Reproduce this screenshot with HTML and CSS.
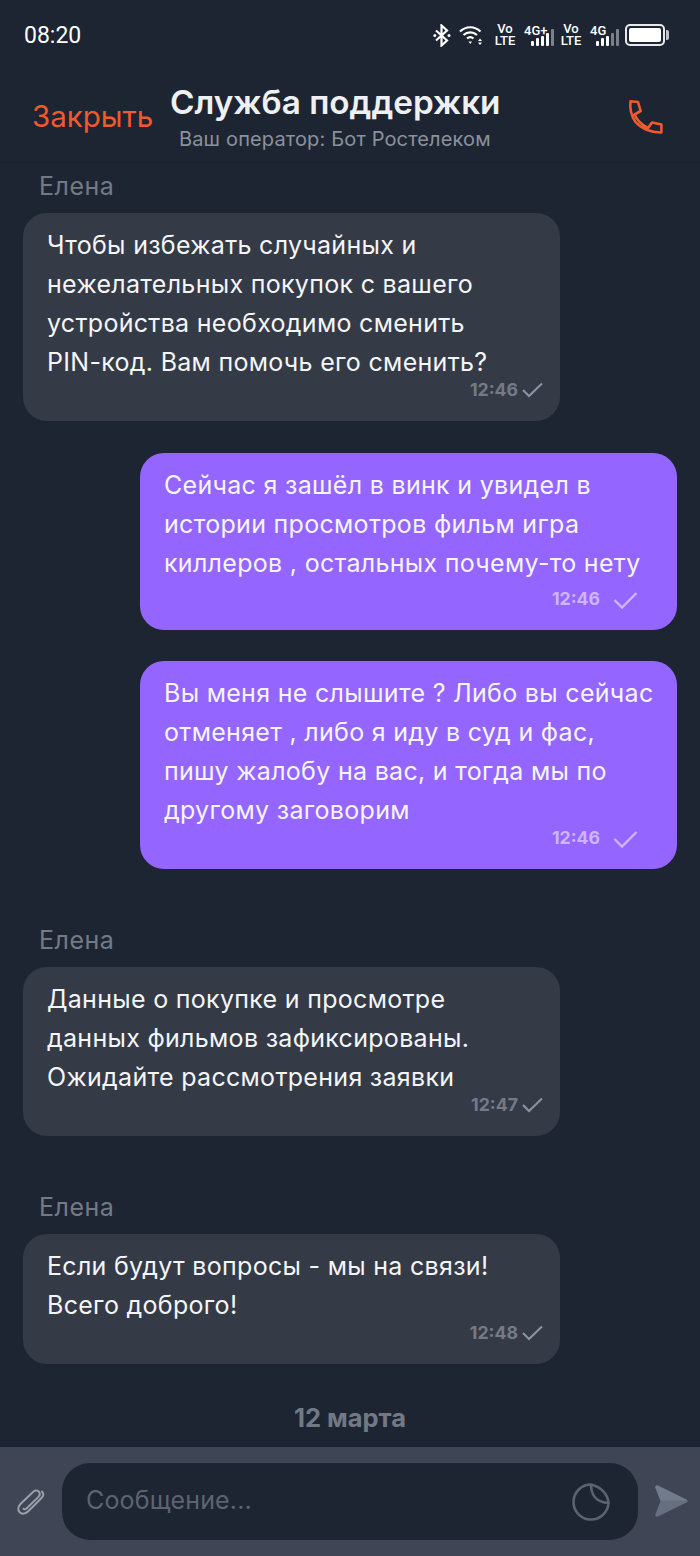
FILE: index.html
```html
<!DOCTYPE html>
<html lang="ru">
<head>
  <meta charset="UTF-8">
  <meta name="viewport" content="width=device-width, initial-scale=1">
  <title>Служба поддержки</title>
  <link rel="stylesheet" href="styles.css">
</head>
<body>
  <div class="screen">
    <div class="status-bar">
      <span class="clock">08:20</span>
      <div class="status-icons">
        <svg class="ic-bt" width="18" height="23" viewBox="0 0 18 23"><path d="M3 6.500l11 10-5.500 5V1.500l5.500 5-11 10" fill="none" stroke="#fff" stroke-width="2.200"/><circle cx="1.800" cy="11.500" r="1.500" fill="#fff"/><circle cx="16" cy="11.500" r="1.500" fill="#fff"/></svg>
        <svg class="ic-wifi" width="25" height="20" viewBox="0 0 25 20"><path d="M1 6.500C7 .8 15.500.8 21.500 6.500M4.500 10c4-3.500 9.500-3.500 13.500 0M8 13.500c2-1.700 4.500-1.700 6.500 0" fill="none" stroke="#fff" stroke-width="2.200"/><path d="M9.500 16.500h3.500l-1.700 2.500zM21 13.500l2 2.500h-4zM21 20l2-2.600h-4z" fill="#fff"/></svg>
        <div class="volte volte-first"><span>Vo</span><span>LTE</span></div>
        <div class="net">
          <span class="net-label">4G+</span>
          <div class="bars"><i class="b1"></i><i class="b2"></i><i class="b3"></i><i class="b4"></i><i class="b5 off"></i></div>
        </div>
        <div class="volte"><span>Vo</span><span>LTE</span></div>
        <div class="net net-short">
          <span class="net-label">4G</span>
          <div class="bars"><i class="b1"></i><i class="b2"></i><i class="b3"></i><i class="b4 off"></i><i class="b5 off"></i></div>
        </div>
        <div class="battery"><div class="battery-fill"></div></div>
      </div>
    </div>

    <header class="top-bar">
      <a class="close-link">Закрыть</a>
      <div class="top-title">
        <h1>Служба поддержки</h1>
        <p>Ваш оператор: Бот Ростелеком</p>
      </div>
      <svg class="phone" width="38" height="38" viewBox="0 0 38 38"><path d="M3.500 4.300L11 5l2.700 9-6.200 3.500C10 23 15 28 21 31l4-5.500 9.400 2v8C24 35.700 14 31.500 8.500 25 4.500 19 2.600 12 3.500 4.300z" fill="none" stroke="#f2592e" stroke-width="2.600" stroke-linejoin="round"/></svg>
    </header>

    <main class="chat">
      <div class="sender first">Елена</div>
      <div class="bubble in">
        <div class="text">Чтобы избежать случайных и<br>нежелательных покупок с вашего<br>устройства необходимо сменить<br>PIN-код. Вам помочь его сменить?</div>
        <div class="meta"><span class="time">12:46</span><svg class="tick" width="21" height="16" viewBox="0 0 21 16"><path d="M1 8l6 6L20 1.500" fill="none" stroke="currentColor" stroke-width="2"/></svg></div>
      </div>

      <div class="bubble out out-a">
        <div class="text">Сейчас я зашёл в винк и увидел в<br>истории просмотров фильм игра<br>киллеров , остальных почему-то нету</div>
        <div class="meta meta-low"><span class="time">12:46</span><svg class="tick" width="25" height="19" viewBox="0 0 25 19"><path d="M1.500 9l7.500 7.500L23.500 2" fill="none" stroke="currentColor" stroke-width="2.400"/></svg></div>
      </div>
      <div class="bubble out out-b">
        <div class="text">Вы меня не слышите ? Либо вы сейчас<br>отменяет , либо я иду в суд и фас,<br>пишу жалобу на вас, и тогда мы по<br>другому заговорим</div>
        <div class="meta"><span class="time">12:46</span><svg class="tick" width="25" height="19" viewBox="0 0 25 19"><path d="M1.500 9l7.500 7.500L23.500 2" fill="none" stroke="currentColor" stroke-width="2.400"/></svg></div>
      </div>

      <div class="sender">Елена</div>
      <div class="bubble in">
        <div class="text">Данные о покупке и просмотре<br>данных фильмов зафиксированы.<br>Ожидайте рассмотрения заявки</div>
        <div class="meta"><span class="time">12:47</span><svg class="tick" width="21" height="16" viewBox="0 0 21 16"><path d="M1 8l6 6L20 1.500" fill="none" stroke="currentColor" stroke-width="2"/></svg></div>
      </div>

      <div class="sender">Елена</div>
      <div class="bubble in">
        <div class="text">Если будут вопросы - мы на связи!<br>Всего доброго!</div>
        <div class="meta"><span class="time">12:48</span><svg class="tick" width="21" height="16" viewBox="0 0 21 16"><path d="M1 8l6 6L20 1.500" fill="none" stroke="currentColor" stroke-width="2"/></svg></div>
      </div>

      <div class="date">12 марта</div>
    </main>

    <footer class="composer">
      <svg class="clip" width="32" height="32" viewBox="0 0 32 32"><path d="M27 5.500c1.800 2 1.500 4.500-.5 6.500L13.500 25c-3 3-6.500 3.500-8.800 1.200s-1.800-5.700 1-8.500L18 6c1.800-1.800 4.200-2 5.700-.5s1.300 3.800-.5 5.600L11.500 22.500c-1 1-2.200 1.100-3 .3" fill="none" stroke="#9aa0aa" stroke-width="2" stroke-linecap="round"/></svg>
      <div class="input-box">
        <span class="placeholder">Сообщение...</span>
        <svg class="sticker" width="40" height="40" viewBox="0 0 40 40"><path d="M20 2.500a17.500 17.500 0 1 0 17.500 18.500C37 12 30 5 20 2.500zM20 2.500c0 11 6 18 17.500 18.500" fill="none" stroke="#5c6370" stroke-width="2.600" stroke-linejoin="round"/></svg>
      </div>
      <svg class="send" width="36" height="36" viewBox="0 0 36 36"><path d="M3.500 3c.5-1.500 1.500-1.500 2.500-1L34.500 16c.6.400.8.700.8 1H9z" fill="#727b8b" stroke="#727b8b" stroke-linejoin="round"/><path d="M35.300 17c0 .3-.2.600-.8 1L6 32c-1.500.7-2.700.2-2.300-1.300L9 17z" fill="#666f7f" stroke="#666f7f" stroke-linejoin="round"/></svg>
    </footer>
  </div>
</body>
</html>
```

FILE: styles.css
```css
:root {
  --bg: #1e2532;
  --bubble: #343b47;
  --composer: #3f4554;
  --purple: #9466ff;
  --orange: #f2592e;
  --muted: #737a87;
}
*, *::before, *::after {
  box-sizing: border-box;
}
html, body {
  height: 100%;
}
body {
  margin: 0;
  font-family: Inter, 'Noto Sans', sans-serif;
  background: var(--bg);
  color: #f4f5f7;
}
.screen {
  display: flex;
  flex-direction: column;
  height: 1556px;
  overflow: hidden;
}

/* status bar */
.status-bar {
  display: flex;
  justify-content: space-between;
  align-items: center;
  height: 70px;
  padding: 0 35px 0 24px;
}
.clock {
  font-family: Roboto, sans-serif;
  font-size: 23px;
  color: #fff;
}
.status-icons {
  display: flex;
  align-items: center;
  gap: 7px;
  color: #fff;
}
.ic-wifi {
  margin-left: 1px;
}
.volte {
  display: flex;
  flex-direction: column;
  align-items: center;
  font-family: Roboto, sans-serif;
  font-size: 13px;
  line-height: 12px;
  font-weight: 500;
  width: 20px;
}
.volte-first {
  margin-left: 4px;
}
.net {
  position: relative;
  width: 30px;
  height: 22px;
  margin-left: 2px;
}
.net-short {
  width: 29px;
}
.net-label {
  position: absolute;
  top: 0;
  left: 0;
  font-family: Roboto, sans-serif;
  font-size: 13px;
  line-height: 13px;
  font-weight: 500;
}
.bars {
  position: absolute;
  right: 0;
  bottom: 0;
  display: flex;
  align-items: flex-end;
  gap: 2px;
}
.bars i {
  display: block;
  width: 3px;
  background: #fff;
  border-radius: 1px;
}
.bars .off {
  background: #7b808a;
}
.b1 { height: 5px; }
.b2 { height: 8px; }
.b3 { height: 10px; }
.b4 { height: 13px; }
.b5 { height: 17px; }
.battery {
  position: relative;
  width: 40px;
  height: 22px;
  margin-left: -1px;
  padding: 2px;
  border: 2px solid #e8e9eb;
  border-radius: 5px;
}
.battery::after {
  content: "";
  position: absolute;
  top: 4px;
  right: -6px;
  width: 3px;
  height: 10px;
  background: #bfc2c7;
  border-radius: 0 2px 2px 0;
}
.battery-fill {
  height: 100%;
  background: #fff;
  border-radius: 2px;
}

/* header */
.top-bar {
  display: flex;
  align-items: center;
  height: 93px;
  padding: 0 36px 0 32px;
  border-bottom: 1px solid #1b212d;
}
.close-link {
  width: 120px;
  font-size: 29.5px;
  color: var(--orange);
  white-space: nowrap;
}
.top-title {
  flex: 1;
  margin: 1px 0 0 18px;
  white-space: nowrap;
}
.top-title h1 {
  margin: 0;
  font-size: 33.300px;
  line-height: 40px;
  font-weight: 600;
  color: #eef0f2;
}
.top-title p {
  margin: 5px 0 0 9px;
  font-size: 20px;
  line-height: 24px;
  letter-spacing: .15px;
  color: #8b919c;
}
.phone {
  flex: none;
  margin: 0 -1px 0 0;
}

/* messages */
.chat {
  flex: 1;
  display: flex;
  flex-direction: column;
  padding: 0 23px;
  overflow: hidden;
}
.sender {
  height: 40px;
  margin: 58px 0 0 16px;
  font-size: 25px;
  line-height: 27px;
  letter-spacing: .5px;
  color: var(--muted);
}
.sender.first {
  margin-top: 10px;
}
.bubble {
  width: 537px;
  padding: 13px 0 0 24px;
  border-radius: 24px;
  flex: none;
}
.bubble.in {
  background: var(--bubble);
}
.bubble.out {
  align-self: flex-end;
  background: var(--purple);
}
.out-a {
  margin-top: 32px;
}
.out-b {
  margin-top: 31px;
}
.text {
  font-size: 25px;
  line-height: 39px;
  letter-spacing: .3px;
  white-space: nowrap;
}
.meta {
  display: flex;
  justify-content: flex-end;
  align-items: flex-start;
  height: 39px;
  padding-right: 17px;
  font-size: 18px;
  line-height: 16px;
  color: #8f949c;
}
.meta-low {
  height: 47px;
  padding-top: 8px;
}
.out .meta {
  color: #cdb6ff;
  padding-right: 39px;
}
.time {
  font-weight: 700;
  font-size: 17.7px;
}
.in .time {
  color: #747b87;
}
.tick {
  margin-left: 4px;
}
.out .tick {
  margin-left: 13px;
}
.date {
  margin-top: 40px;
  text-align: center;
  font-size: 25.5px;
  font-weight: 700;
  line-height: 28px;
  color: #727985;
}

/* bottom input */
.composer {
  display: flex;
  align-items: center;
  height: 109px;
  flex: none;
  padding: 16px 12px 16px 15px;
  background: var(--composer);
}
.clip {
  flex: none;
}
.input-box {
  flex: 1;
  display: flex;
  justify-content: space-between;
  align-items: center;
  height: 77px;
  margin: 0 14px 0 15px;
  padding: 0 27px 0 24px;
  background: var(--bg);
  border-radius: 28px;
}
.placeholder {
  margin-top: -3px;
  font-size: 25px;
  letter-spacing: .15px;
  color: #5d6470;
}
.send {
  flex: none;
}
```
